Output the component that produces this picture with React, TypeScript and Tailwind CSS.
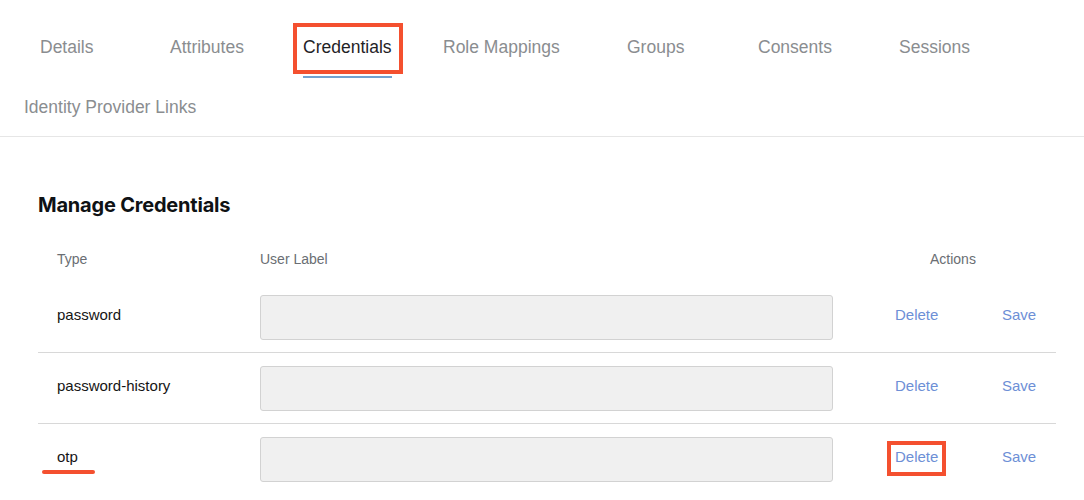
import React from "react";

const tabs = [
  { label: "Details", w: "w-[130px]" },
  { label: "Attributes", w: "w-[133px]" },
  { label: "Credentials", w: "w-[140px]", active: true },
  { label: "Role Mappings", w: "w-[184px]" },
  { label: "Groups", w: "w-[131px]" },
  { label: "Consents", w: "w-[141px]" },
  { label: "Sessions", w: "w-auto" },
];

const credentials = [
  { type: "password" },
  { type: "password-history" },
  { type: "otp", marked: true },
];

export default function App() {
  return (
    <div className="w-[1084px] h-[500px] overflow-hidden bg-white font-['Liberation_Sans',Arial,sans-serif]">
      {/* Tab bar */}
      <div className="border-b border-[#e6e6e6]">
        <div className="flex pt-[18px] pl-[40px]">
          {tabs.map((tab) => (
            <div key={tab.label} className={tab.w}>
              <button
                className={
                  "relative h-[60px] flex items-center text-[17.5px] border-b-2 " +
                  (tab.active ? "text-[#1f2326] border-[#73a2d0]" : "text-[#8a8d90] border-transparent")
                }
              >
                {tab.label}
                {tab.active && (
                  <span className="absolute -left-[10px] -right-[11px] top-[5px] h-[51px] border-4 border-[#f4502f]" />
                )}
              </button>
            </div>
          ))}
        </div>
        <div className="h-[58px] flex items-center pl-[24px] text-[17.5px] text-[#8a8d90]">
          Identity Provider Links
        </div>
      </div>

      {/* Credentials table */}
      <div className="pl-[38px] pt-[54px]">
        <h2 className="text-[20px] leading-[28px] font-bold text-[#0f1214] font-['Inter',sans-serif] tracking-[-0.2px]">
          Manage Credentials
        </h2>
        <div className="w-[1018px] mt-[18px]">
          <div className="grid grid-cols-[222px_573px_1fr] h-[45px] items-center text-[14px] text-[#6a6e73]">
            <div className="pl-[19px]">Type</div>
            <div>User Label</div>
            <div className="pl-[97px]">Actions</div>
          </div>
          {credentials.map((c, i) => (
            <div
              key={c.type}
              className={
                "grid grid-cols-[222px_573px_1fr] h-[71px] items-center text-[15px] leading-[22px] " +
                (i < credentials.length - 1 ? "border-b border-[#d8d8d8]" : "")
              }
            >
              <div className="pl-[19px] pb-[5px] text-[#151515]">
                <span className="relative inline-block">
                  {c.type}
                  {c.marked && (
                    <span className="absolute -left-[15px] top-[24px] w-[53px] h-[4px] rounded-full bg-[#f4502f]" />
                  )}
                </span>
              </div>
              <div>
                <input
                  readOnly
                  className="block w-full h-[45px] bg-[#f0f0f0] border border-[#d2d2d2] rounded-[3px]"
                />
              </div>
              <div className="flex items-center pl-[62px] pb-[5px] text-[#6d8fd6]">
                <button className="relative w-[107px] text-left">
                  <span className="relative inline-block">
                    Delete
                    {c.marked && (
                      <span className="absolute -left-[8px] -right-[8px] -top-[5px] -bottom-[8px] border-4 border-[#f4502f]" />
                    )}
                  </span>
                </button>
                <button>Save</button>
              </div>
            </div>
          ))}
        </div>
      </div>
    </div>
  );
}
